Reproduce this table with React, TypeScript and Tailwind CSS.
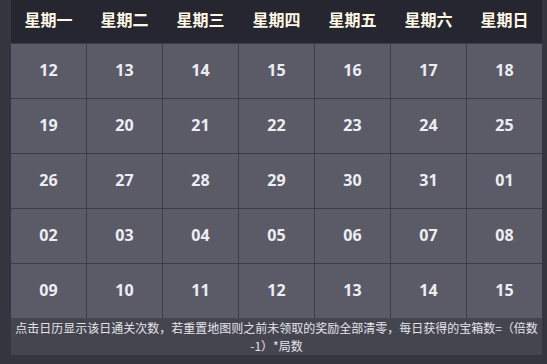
import React from "react";

const days = ["星期一", "星期二", "星期三", "星期四", "星期五", "星期六", "星期日"];
const nums = [
  "12", "13", "14", "15", "16", "17", "18",
  "19", "20", "21", "22", "23", "24", "25",
  "26", "27", "28", "29", "30", "31", "01",
  "02", "03", "04", "05", "06", "07", "08",
  "09", "10", "11", "12", "13", "14", "15",
];

export default function App() {
  return (
    <div
      className="w-[547px] h-[364px] bg-[#353540] pl-[11px] pr-[5px] pb-[9px] overflow-hidden"
      style={{ fontFamily: '"Open Sans", "Noto Sans CJK SC", sans-serif' }}
    >
      <div className="w-[531px] flex flex-col">
        <div className="grid grid-cols-7 gap-px bg-[#262630] h-[43px] border-b border-[#3d3d49] box-content">
          {days.map((d) => (
            <div
              key={d}
              className="flex items-center justify-center pb-[5px] text-[16px] font-bold text-[#fff8e4]"
              style={{ fontFamily: '"Noto Sans CJK SC", sans-serif' }}
            >
              {d}
            </div>
          ))}
        </div>
        <div className="grid grid-cols-7 gap-px bg-[#3d3d49] auto-rows-[54px]">
          {nums.map((n, i) => (
            <div
              key={i}
              className="bg-[#5b5b67] flex items-center justify-center pb-[2px] text-[16px] font-bold text-[#eceef4]"
            >
              {n}
            </div>
          ))}
        </div>
        <div
          className="h-[37px] bg-[#45454f] text-[12px] leading-[18px] text-[#e4e4ea] text-center pt-[1px]"
          style={{ fontFamily: '"Noto Sans CJK SC", sans-serif' }}
        >
          <div className="whitespace-nowrap flex justify-center">
            点击日历显示该日通关次数，若重置地图则之前未领取的奖励全部清零，每日获得的宝箱数=（倍数
          </div>
          <div>-1）*局数</div>
        </div>
      </div>
    </div>
  );
}
